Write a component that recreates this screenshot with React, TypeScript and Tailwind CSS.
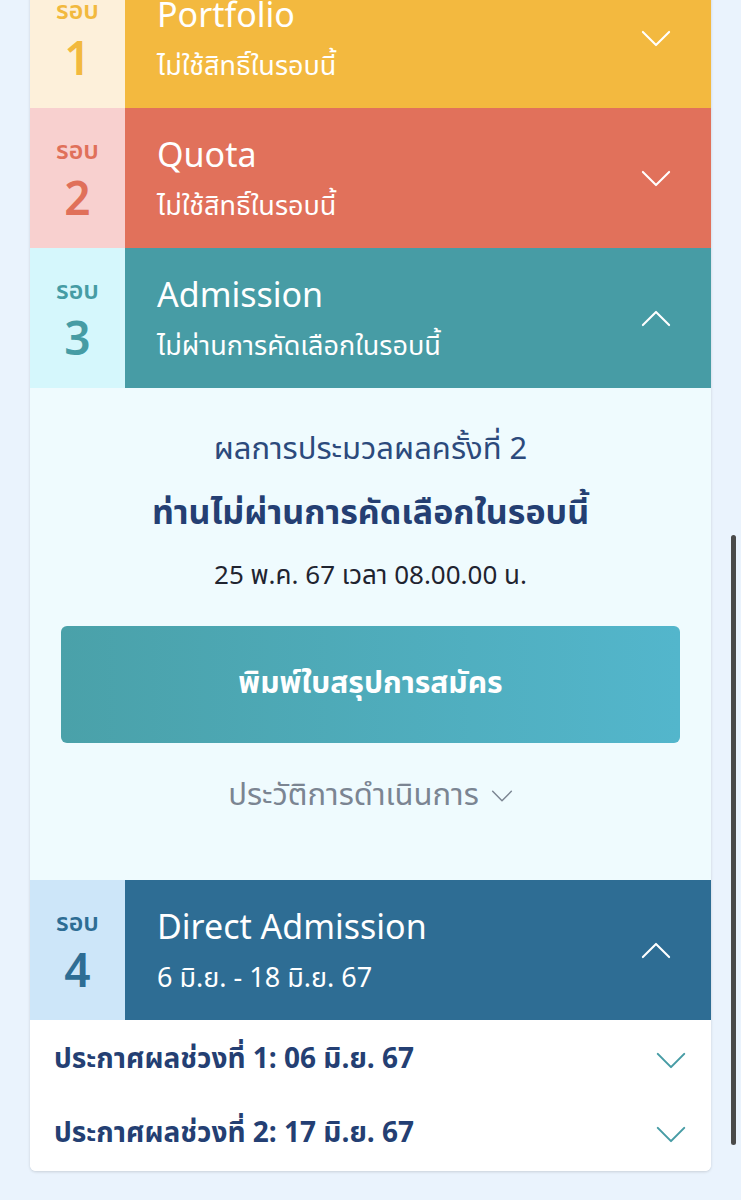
import React from "react";

const font = { fontFamily: '"Noto Sans Thai", "Noto Sans", "DejaVu Sans", sans-serif' };

function Chevron({ up = false, className = "" }: { up?: boolean; className?: string }) {
  return (
    <svg viewBox="0 0 32 18" className={className} fill="none" stroke="currentColor" strokeWidth={2.2} strokeLinecap="round" strokeLinejoin="round">
      {up ? <path d="M2 16 L16 2 L30 16" /> : <path d="M2 2 L16 16 L30 2" />}
    </svg>
  );
}

type Round = {
  no: string;
  title: string;
  sub: string;
  leftBg: string;
  leftText: string;
  rightBg: string;
  open: boolean;
};

const rounds: Round[] = [
  { no: "1", title: "Portfolio", sub: "ไม่ใช้สิทธิ์ในรอบนี้", leftBg: "bg-[#fdf0da]", leftText: "text-[#f2b93e]", rightBg: "bg-[#f3b93f]", open: false },
  { no: "2", title: "Quota", sub: "ไม่ใช้สิทธิ์ในรอบนี้", leftBg: "bg-[#f8d0cf]", leftText: "text-[#e0705a]", rightBg: "bg-[#e1715b]", open: false },
  { no: "3", title: "Admission", sub: "ไม่ผ่านการคัดเลือกในรอบนี้", leftBg: "bg-[#d5f7fc]", leftText: "text-[#469ca4]", rightBg: "bg-[#479ca5]", open: true },
  { no: "4", title: "Direct Admission", sub: "6 มิ.ย. - 18 มิ.ย. 67", leftBg: "bg-[#cde6f9]", leftText: "text-[#2e6d94]", rightBg: "bg-[#2e6d94]", open: true },
];

function RoundHeader({ r }: { r: Round }) {
  return (
    <div className="flex h-[140px]">
      <div className={`w-[95px] shrink-0 flex flex-col items-center justify-center pt-[12px] ${r.leftBg} ${r.leftText}`}>
        <span className="text-[25px] leading-[34px] font-semibold">รอบ</span>
        <span className="text-[46px] leading-[66px] font-semibold">{r.no}</span>
      </div>
      <div className={`flex-1 flex items-center justify-between pl-8 pr-10 text-white ${r.rightBg}`}>
        <div className="flex flex-col">
          <span className="text-[34px] leading-[58px]">{r.title}</span>
          <span className="text-[27px] leading-[42px]">{r.sub}</span>
        </div>
        <Chevron up={r.open} className="w-[30px] h-[17px]" />
      </div>
    </div>
  );
}

export default function App() {
  return (
    <div className="min-h-screen bg-[#eaf3fd] relative overflow-hidden" style={font}>
      <div className="mx-[30px] -mt-[32px] bg-white rounded-b-md shadow-[0_1px_3px_rgba(0,0,0,0.15)] overflow-hidden">
        {rounds.slice(0, 3).map((r) => (
          <RoundHeader key={r.no} r={r} />
        ))}

        {/* Admission result */}
        <div className="bg-[#effbfe] h-[492px] flex flex-col items-center pt-[40px]">
          <p className="text-[31px] leading-[44px] text-[#2c4a7c]">ผลการประมวลผลครั้งที่ 2</p>
          <p className="mt-[18px] text-[34px] leading-[48px] font-bold text-[#243f73]">ท่านไม่ผ่านการคัดเลือกในรอบนี้</p>
          <p className="mt-[20px] text-[26px] leading-[36px] text-[#1f2430]">25 พ.ค. 67 เวลา 08.00.00 น.</p>
          <button className="mt-[32px] w-[619px] h-[117px] rounded-md bg-gradient-to-r from-[#4aa1a9] to-[#53b6cc] text-white text-[30px] font-bold">
            พิมพ์ใบสรุปการสมัคร
          </button>
          <div className="mt-[32px] flex items-center gap-3 text-[#7b8592]">
            <span className="text-[31px] leading-[42px]">ประวัติการดำเนินการ</span>
            <Chevron className="w-[22px] h-[12px]" />
          </div>
        </div>

        <RoundHeader r={rounds[3]} />

        <div className="bg-white flex flex-col pt-[3px]">
          {["ประกาศผลช่วงที่ 1: 06 มิ.ย. 67", "ประกาศผลช่วงที่ 2: 17 มิ.ย. 67"].map((t) => (
            <div key={t} className="flex items-center justify-between pl-[24px] pr-[24px] h-[74px]">
              <span className="text-[28px] font-bold text-[#243f73]">{t}</span>
              <Chevron className="w-[32px] h-[17px] text-[#479ca5]" />
            </div>
          ))}
        </div>
      </div>

      {/* scroll indicator */}
      <div className="absolute right-[5px] top-[535px] w-[5px] h-[610px] rounded-full bg-[#4a4a4a]" />
    </div>
  );
}
